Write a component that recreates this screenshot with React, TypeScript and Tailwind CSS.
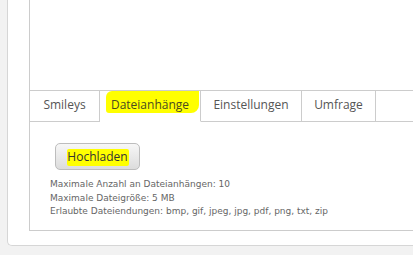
import React from 'react';

const tabs = [
  { label: 'Smileys', width: 'w-[70px]' },
  { label: 'Dateianhänge', width: 'w-[101px]', active: true },
  { label: 'Einstellungen', width: 'w-[101px]' },
  { label: 'Umfrage', width: 'w-[74px]' },
];

const App = () => {
  return (
    <div className="w-[413px] h-[255px] overflow-hidden bg-[#f2f2f2]">
      <div className="ml-[7px] h-[246px] bg-white border-l border-b border-[#d6d6d6] rounded-bl-[5px] pl-[21px] pb-[14px]">
        <div className="h-full border-l border-b border-[#cccccc] flex flex-col">
          {/* editor area */}
          <div className="h-[91px] border-b border-[#cccccc]" />

          {/* tabs */}
          <div className="flex h-[31px] font-['Open_Sans',sans-serif] text-[12px] text-[#555555]">
            {tabs.map((tab) => (
              <div
                key={tab.label}
                className={`${tab.width} relative flex items-center justify-center border-r border-[#cccccc] ${
                  tab.active ? 'border-b border-b-white' : 'border-b'
                }`}
              >
                {tab.active && (
                  <span className="absolute left-[6px] right-[1px] top-0 h-[22px] bg-[#ffff00] rounded-tl-[6px] rounded-br-[8px] rounded-bl-[3px]" />
                )}
                <span className={`relative pb-[2px] ${tab.active ? 'text-[#4a4a20]' : ''}`}>{tab.label}</span>
              </div>
            ))}
            <div className="flex-1 border-b border-[#cccccc]" />
          </div>

          {/* content */}
          <div className="pl-[25px] pt-[21px]">
            <button className="relative w-[85px] h-[27px] rounded-[5px] border border-[#bdbdbd] bg-gradient-to-b from-[#f7f7f7] to-[#dcdcdc] font-['Open_Sans',sans-serif] text-[12px] text-[#333333] flex items-center justify-center">
              <span className="absolute left-[11px] top-[5px] w-[62px] h-[17px] bg-[#ffff00] rounded-[2px]" />
              <span className="relative">Hochladen</span>
            </button>
            <div className="mt-[8px] -ml-[5px] font-['DejaVu_Sans',Verdana,sans-serif] text-[9px] leading-[13.5px] text-[#666666]">
              <p>Maximale Anzahl an Dateianhängen: 10</p>
              <p>Maximale Dateigröße: 5 MB</p>
              <p>Erlaubte Dateiendungen: bmp, gif, jpeg, jpg, pdf, png, txt, zip</p>
            </div>
          </div>
        </div>
      </div>
    </div>
  );
};

export default App;
